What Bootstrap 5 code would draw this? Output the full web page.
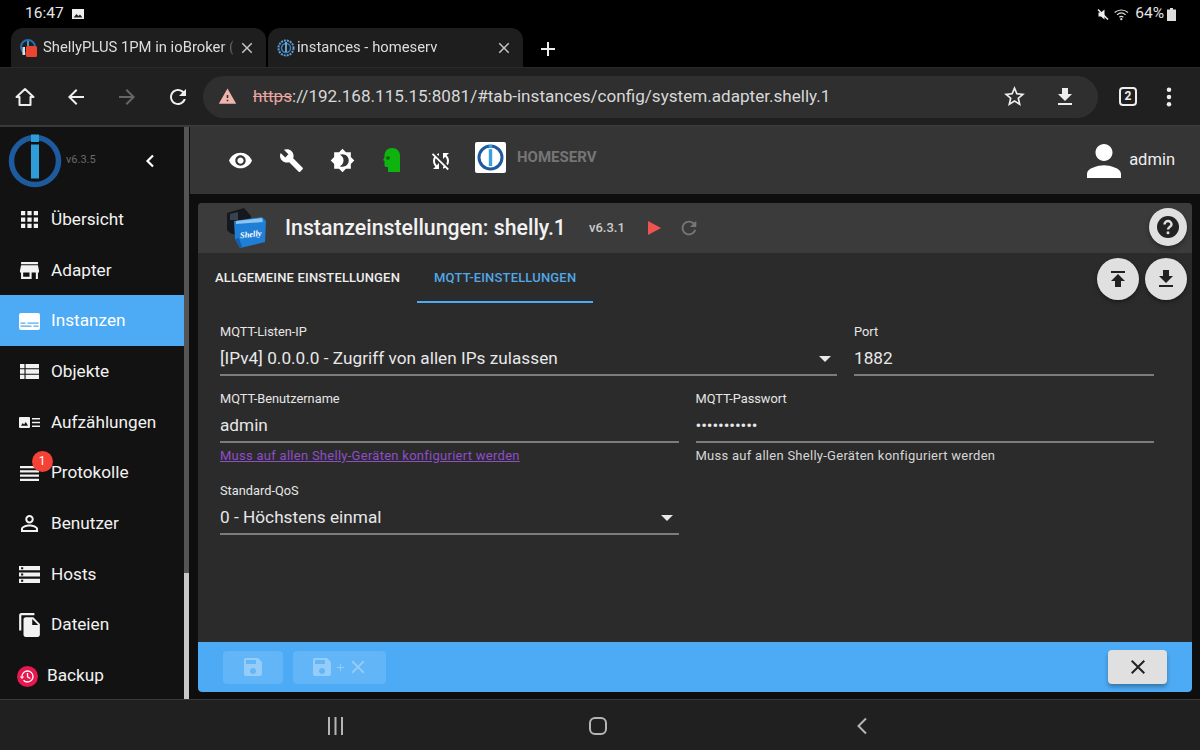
<!DOCTYPE html>
<html lang="de">
<head>
<meta charset="utf-8">
<title>instances - homeserv</title>
<link href="https://cdn.jsdelivr.net/npm/bootstrap@5.3.0/dist/css/bootstrap.min.css" rel="stylesheet">
<style>
html,body{margin:0;height:750px;width:1200px;overflow:hidden;background:#000;font-family:Roboto,"Liberation Sans",sans-serif;color:#fff}
svg{display:block;fill:currentColor;flex:none}
.shell{width:1200px;height:750px}
.statusbar{height:28px;padding:0 24px 0 25px;font-size:15.5px;color:#e4e4e4;line-height:1}
.status-right{gap:5px}
.status-batt{margin-left:-2px}
.tabstrip{height:39px;padding-left:11px;gap:2px;color:#ddd}
.browser-tab{width:255px;height:39px;background:#1e1e1e;border-radius:12px 12px 0 0;padding:0 10px 0 9px;font-size:14.8px;white-space:nowrap;overflow:hidden;gap:5px}
.browser-tab span{flex:1;overflow:hidden;-webkit-mask-image:linear-gradient(90deg,#000 94%,rgba(0,0,0,.2));mask-image:linear-gradient(90deg,#000 94%,rgba(0,0,0,.2))}
.browser-tab span.tight{margin-left:-3px}
.browser-tab .tab-x{color:#c4c4c4}
.tab-add{margin-left:11px;margin-top:3px;color:#eee}
.toolbar{height:60px;background:#202020;border-top:1px solid #2a2a2a;border-bottom:2px solid #3a3a3a;padding:0 0 0 13px;color:#eee}
.tb-ico{margin-right:27px}
.tb-ico.last{margin-right:0}
.tb-off{color:#666}
.url-pill{width:895px;height:42px;background:#2f2f2f;border-radius:21px;margin-left:13px;margin-right:21px;padding:0 21px 0 15px;font-size:17.1px;color:#d8d8d8;white-space:nowrap}
.url-warn{color:#eeb4ae;margin-right:16px}
.url-text{padding-top:1px}
.url-pill s{color:#e8a5a0;text-decoration-thickness:1px}
.url-acts{gap:26px;color:#eee}
.tab-count{width:18px;height:19px;border:2px solid #eee;border-radius:4px;font-size:12px;font-weight:700;line-height:15px;text-align:center}
.tb-dots{margin-left:29px}
.appbody{height:572px;background:#0e0e0e}
.sidebar{width:184px;background:#121212;flex:none}
.side-head{height:67px;padding-left:8px}
.side-ver{font-size:11px;color:#6a6a6a;margin-left:4px;width:30px}
.side-back{margin-left:48px}
.side-link{height:50.7px;padding:1px 0 0 20px;color:#f2f2f2;font-size:17.2px;gap:12px;position:relative}
.side-link:hover{color:#f2f2f2}
.side-link.is-on{background:#4dabf5;color:#fff}
.side-link.is-backup{padding-left:17px;gap:9px}
.ico-wide{margin-left:-1px;margin-right:-1px}
.ico-grid{margin-left:1px;margin-right:1px}
.side-badge{position:absolute;left:31.5px;top:4px;width:21px;height:21px;border-radius:50%;background:#f44336;font-size:12px;line-height:21px;text-align:center;color:#fff}
.scrolltrack{width:5px;background:#555;flex:none;display:flex;flex-direction:column;justify-content:flex-end;margin-right:1px}
.scrollthumb{height:126px;background:#c8c8c8}
.app-main{min-width:0}
.app-head{height:67px;background:#353535;padding-left:38px;padding-right:25px}
.head-ico{margin-right:26px;color:#fff}
.head-ico.b{margin-right:25px}
.head-green{margin-left:3px;margin-right:28px}
.head-sync{margin-right:22px}
.brand-box{width:31px;height:31px;background:#fff;border-radius:2px;margin-top:-6px}
.brand-name{font-size:15px;font-weight:700;color:#757575;margin-left:11px;margin-top:-6px}
.user-name{font-size:16.5px;color:#eee;margin-left:8px}
.cfg-wrap{padding:9px 8px 7px 8px;height:505px}
.cfg-card{height:489px;background:#2b2b2b;border-radius:4px;position:relative;overflow:hidden}
.cfg-title{height:50px;background:#3b3b3b;padding-left:26px}
.cfg-title h1{font-size:21.3px;font-weight:500;margin:0 0 0 19px;color:#f2f2f2;line-height:1}
.cfg-ver{font-size:13px;font-weight:500;color:#ccc;margin-left:23px;margin-right:23px}
.cfg-play{margin-right:17px}
.cfg-reload{color:#777}
.tabs-row{height:50px;border:0;flex-wrap:nowrap}
.tab-item{height:50px;padding:0 17px;font-size:13px;font-weight:500;letter-spacing:.17px;color:#eee;text-transform:uppercase;line-height:50px;white-space:nowrap;border-bottom:2px solid transparent}
.tab-item.is-on{color:#52a8e6;border-bottom-color:#4dabf5}
.round-btn{position:absolute;border-radius:50%;background:#e0e0e0;color:#222;display:flex;align-items:center;justify-content:center;box-shadow:0 2px 4px rgba(0,0,0,.4);padding:0;border:0}
.rb-help{width:38px;height:38px;right:5px;top:5px}
.rb-up{width:42px;height:42px;right:53px;top:55px}
.rb-down{width:42px;height:42px;right:5px;top:55px}
.cfg-form{height:339px;padding:21px 38px 0 22px}
.cfg-row{--bs-gutter-x:17px;margin-left:-8.5px;margin-right:-8.5px}
.fld{border-bottom:2px solid #7c7c7c;height:52px;position:relative}
.fld-wrap{height:67px}
.fld-label{font-size:12.8px;line-height:16px;color:#e6e6e6;height:22px;white-space:nowrap}
.fld-val{font-size:17.2px;line-height:25px;color:#e8e8e8;letter-spacing:.02px;white-space:nowrap}
.fld-val.pw{font-size:17px;letter-spacing:-.1px}
.caret-down{position:absolute;right:6px;top:32px;width:0;height:0;border:6px solid transparent;border-top:6px solid #e8e8e8;border-bottom:0}
.fld-help{font-size:13px;line-height:16px;margin-top:5px;color:#d6d6d6;white-space:nowrap;letter-spacing:.27px}
.fld-help a{color:#8e4ec6;text-decoration:underline}
.row-two{height:92px}
.cfg-foot{height:50px;background:#4dabf5;padding:8px 25px 8px 25px;gap:10px;border-radius:0 0 4px 4px}
.foot-dis{height:33px;background:rgba(255,255,255,.12);border:0;border-radius:4px;color:rgba(255,255,255,.32);padding:0;display:flex;align-items:center;justify-content:center}
.foot-dis.one{width:60px}
.foot-dis.two{width:93px}
.foot-close{width:59px;height:34px;background:#e0e0e0;border:0;border-radius:4px;color:#222;padding:0;box-shadow:0 3px 4px rgba(0,0,0,.3);display:flex;align-items:center;justify-content:center}
.navbottom{height:51px;background:#202020;border-top:1px solid #3a3a3a;color:#b5b5b5;padding-left:327px;padding-top:2px}
.nb-home{margin-left:245px}
.nb-back{margin-left:249px}
</style>
</head>
<body>
<div class="shell d-flex flex-column">

  <div class="statusbar d-flex align-items-center justify-content-between">
    <div class="d-flex align-items-center gap-2">
      <span>16:47</span>
      <svg width="12" height="12" viewBox="0 0 12 12"><path d="M0 1h12v10H0z" fill="#eee"/><path d="M1.500 9.500l3-3.500 2 2 1.500-1.500 2.500 3z" fill="#222"/></svg>
    </div>
    <div class="status-right d-flex align-items-center">
      <svg width="12" height="13" viewBox="0 0 24 24"><path d="M3 8h5l7-6v20l-7-6H3z" fill="#eee"/><path d="M2 2l20 20" stroke="#eee" stroke-width="3"/></svg>
      <svg width="16" height="13" viewBox="0 0 24 18" fill="none"><path d="M1 6c6-5 14-5 20 0M4.500 9.500c4-3.500 9-3.500 13 0M8 13c2-1.500 4-1.500 6 0" stroke="#ddd" stroke-width="1.800" fill="none"/><circle cx="11" cy="16" r="1.700" fill="#ddd"/></svg>
      <span>64%</span>
      <svg class="status-batt" width="9" height="13" viewBox="0 0 9 13"><path d="M3 0h3v1.500h3V13H0V1.500h3z" fill="#ddd"/></svg>
    </div>
  </div>

  <div class="tabstrip d-flex align-items-end">
    <div class="browser-tab d-flex align-items-center">
      <svg width="18" height="18" viewBox="0 0 18 18"><circle cx="8" cy="8" r="7" fill="none" stroke="#2a6ca8" stroke-width="2"/><rect x="2.500" y="8" width="2.500" height="8" fill="#ddd"/><rect x="7" y="2" width="2" height="5" fill="#3a9ad9"/><rect x="6" y="7" width="11" height="11" rx="1.500" fill="#e9452f"/></svg>
      <span>ShellyPLUS 1PM in ioBroker (</span>
      <svg class="tab-x" width="18" height="18" viewBox="0 0 24 24"><path d="M19 6.410L17.590 5 12 10.590 6.410 5 5 6.410 10.590 12 5 17.590 6.410 19 12 13.410 17.590 19 19 17.590 13.410 12z"/></svg>
    </div>
    <div class="browser-tab d-flex align-items-center">
      <svg width="18" height="18" viewBox="0 0 18 18"><circle cx="9" cy="9" r="7.500" fill="none" stroke="#5d9fd8" stroke-width="2" stroke-dasharray="2 1"/><circle cx="9" cy="9" r="4.500" fill="none" stroke="#3f7fc0" stroke-width="1.500"/><rect x="8.200" y="3" width="1.600" height="10" fill="#7cc0ee"/></svg>
      <span class="tight">instances - homeserv</span>
      <svg class="tab-x" width="18" height="18" viewBox="0 0 24 24"><path d="M19 6.410L17.590 5 12 10.590 6.410 5 5 6.410 10.590 12 5 17.590 6.410 19 12 13.410 17.590 19 19 17.590 13.410 12z"/></svg>
    </div>
    <div class="tab-add align-self-center">
      <svg width="24" height="24" viewBox="0 0 24 24"><path d="M19 13h-6v6h-2v-6H5v-2h6V5h2v6h6z"/></svg>
    </div>
  </div>

  <div class="toolbar d-flex align-items-center">
    <svg class="tb-ico" width="24" height="24" viewBox="0 0 24 24"><path d="M12 4L3.500 12H6.500V20H17.500V12H20.500z" fill="none" stroke="currentColor" stroke-width="2" stroke-linejoin="round"/></svg>
    <svg class="tb-ico" width="24" height="24" viewBox="0 0 24 24"><path d="M20 11H7.830l5.590-5.590L12 4l-8 8 8 8 1.410-1.410L7.830 13H20v-2z"/></svg>
    <svg class="tb-ico tb-off" width="24" height="24" viewBox="0 0 24 24"><path d="M12 4l-1.410 1.410L16.170 11H4v2h12.170l-5.580 5.590L12 20l8-8z"/></svg>
    <svg class="tb-ico last" width="24" height="24" viewBox="0 0 24 24"><path d="M17.650 6.350C16.200 4.900 14.210 4 12 4c-4.420 0-7.990 3.580-7.990 8s3.570 8 7.990 8c3.730 0 6.840-2.550 7.730-6h-2.080c-.82 2.330-3.040 4-5.650 4-3.310 0-6-2.690-6-6s2.690-6 6-6c1.660 0 3.140.69 4.220 1.780L13 11h7V4l-2.350 2.350z"/></svg>
    <div class="url-pill d-flex align-items-center">
      <svg class="url-warn" width="19" height="19" viewBox="0 0 24 24"><path d="M1 21h22L12 2 1 21zm12-3h-2v-2h2v2zm0-4h-2v-4h2v4z"/></svg>
      <span class="url-text"><s>https</s>://192.168.115.15:8081/#tab-instances/config/system.adapter.shelly.1</span>
      <div class="url-acts ms-auto d-flex align-items-center">
        <svg width="25" height="25" viewBox="0 0 24 24"><path d="M22 9.240l-7.190-.62L12 2 9.190 8.630 2 9.240l5.460 4.730L5.820 21 12 17.270 18.180 21l-1.630-7.030L22 9.240zM12 15.400l-3.760 2.270 1-4.280-3.320-2.880 4.380-.38L12 6.100l1.710 4.040 4.380.38-3.320 2.880 1 4.280L12 15.400z"/></svg>
        <svg width="24" height="24" viewBox="0 0 24 24"><path d="M19 9h-4V3H9v6H5l7 7 7-7zM5 18v2h14v-2H5z"/></svg>
      </div>
    </div>
    <div class="tab-count">2</div>
    <svg class="tb-dots" width="6" height="20" viewBox="0 0 6 22"><circle cx="3" cy="3" r="2.500"/><circle cx="3" cy="11" r="2.500"/><circle cx="3" cy="19" r="2.500"/></svg>
  </div>

  <div class="appbody d-flex">
    <aside class="sidebar">
      <div class="side-head d-flex align-items-center">
        <svg width="54" height="54" viewBox="0 0 54 54"><circle cx="27" cy="27" r="23.500" fill="none" stroke="#1e5a9e" stroke-width="5.500"/><rect x="23" y="0.500" width="8" height="7.500" fill="#2f9ed8"/><rect x="23" y="8" width="8" height="2.500" fill="#121212"/><rect x="23" y="10.500" width="8" height="34" fill="#2f9ed8"/></svg>
        <span class="side-ver">v6.3.5</span>
        <svg class="side-back" width="12" height="14" viewBox="0 0 12 14" fill="none"><path d="M9 1.500L3.500 7 9 12.500" fill="none" stroke="#fff" stroke-width="2.200"/></svg>
      </div>
      <nav class="nav flex-column">
        <a class="nav-link side-link d-flex align-items-center" href="#"><svg class="ico-grid" width="17" height="17" viewBox="4 4 16 16"><path d="M4 8h4V4H4v4zm6 12h4v-4h-4v4zm-6 0h4v-4H4v4zm0-6h4v-4H4v4zm6 0h4v-4h-4v4zm6-10v4h4V4h-4zm-6 4h4V4h-4v4zm6 6h4v-4h-4v4zm0 6h4v-4h-4v4z"/></svg>Übersicht</a>
        <a class="nav-link side-link d-flex align-items-center" href="#"><svg width="19" height="19" viewBox="3 4 18 16"><path d="M20 4H4v2h16V4zm1 10v-2l-1-5H4l-1 5v2h1v6h10v-6h4v6h2v-6h1zm-9 4H6v-4h6v4z"/></svg>Adapter</a>
        <a class="nav-link side-link is-on d-flex align-items-center" href="#"><svg class="ico-wide" width="21" height="17" viewBox="0 0 21 17"><path fill-rule="evenodd" d="M2 0h17a2 2 0 012 2v13a2 2 0 01-2 2H2a2 2 0 01-2-2V2a2 2 0 012-2zM1.500 9.500v1.200h5V9.500zm7 0v1.200h11V9.500zM1.500 12.500v1.200h11v-1.200zm13 0v1.200h5v-1.200z"/></svg>Instanzen</a>
        <a class="nav-link side-link d-flex align-items-center" href="#"><svg width="19" height="15" viewBox="4 5 17 14" preserveAspectRatio="none"><path d="M4 14h4v-4H4v4zm0 5h4v-4H4v4zM4 9h4V5H4v4zm5 5h12v-4H9v4zm0 5h12v-4H9v4zM9 5v4h12V5H9z"/></svg>Objekte</a>
        <a class="nav-link side-link d-flex align-items-center" href="#"><svg class="ico-wide" width="21" height="11" viewBox="0 0 21 11"><path fill-rule="evenodd" d="M1 0h9a1 1 0 011 1v9a1 1 0 01-1 1H1a1 1 0 01-1-1V1a1 1 0 011-1zM2 8.800h7L6.800 5 5 7.400 3.800 6z"/><path d="M13 1h8v1.500h-8zM13 4.700h8v1.500h-8zM13 8.500h8V10h-8z"/></svg>Aufzählungen</a>
        <a class="nav-link side-link d-flex align-items-center" href="#"><svg width="19" height="15" viewBox="4 5 16 14" preserveAspectRatio="none"><path d="M4 15h16v-2H4v2zm0 4h16v-2H4v2zm0-8h16V9H4v2zm0-6v2h16V5H4z"/></svg><span class="side-badge">1</span>Protokolle</a>
        <a class="nav-link side-link d-flex align-items-center" href="#"><svg width="19" height="17" viewBox="4 4 16 16"><path d="M12 5.900c1.160 0 2.100.94 2.100 2.100s-.94 2.100-2.100 2.100S9.900 9.160 9.900 8s.94-2.100 2.100-2.100m0 9c2.970 0 6.100 1.460 6.100 2.100v1.100H5.900V17c0-.64 3.130-2.100 6.100-2.100M12 4C9.790 4 8 5.790 8 8s1.790 4 4 4 4-1.790 4-4-1.790-4-4-4zm0 9c-2.670 0-8 1.340-8 4v3h16v-3c0-2.660-5.330-4-8-4z"/></svg>Benutzer</a>
        <a class="nav-link side-link d-flex align-items-center" href="#"><svg class="ico-wide" width="21" height="17" viewBox="2 4 20 16"><path d="M2 20h20v-4H2v4zm2-3h2v2H4v-2zM2 4v4h20V4H2zm4 3H4V5h2v2zm-4 7h20v-4H2v4zm2-3h2v2H4v-2z"/></svg>Hosts</a>
        <a class="nav-link side-link d-flex align-items-center" href="#"><svg class="ico-wide" width="21" height="24" viewBox="2 1 19 22"><path d="M16 1H4c-1.100 0-2 .9-2 2v14h2V3h12V1zm-1 4l6 6v10c0 1.100-.9 2-2 2H7.990C6.890 23 6 22.100 6 21l.01-14c0-1.100.89-2 1.990-2h7zm-1 7h5.500L14 6.500V12z"/></svg>Dateien</a>
        <a class="nav-link side-link is-backup d-flex align-items-center" href="#"><svg width="21" height="21" viewBox="0 0 21 21"><circle cx="10.500" cy="10.500" r="10.500" fill="#e8174f"/><path d="M5 10.500a5.500 5.500 0 115.500 5.500 5.500 5.500 0 01-4-1.700M10.500 7v3.800l2.800 1.700" fill="none" stroke="#fff" stroke-width="1.300"/><path d="M2.800 10.500h4.400L5 13z" fill="#fff"/></svg>Backup</a>
      </nav>
    </aside>
    <div class="scrolltrack"><div class="scrollthumb"></div></div>

    <div class="app-main flex-grow-1 d-flex flex-column">
      <header class="app-head d-flex align-items-center">
        <svg class="head-ico" width="25" height="25" viewBox="0 0 24 24"><path d="M12 4.500C7 4.500 2.730 7.610 1 12c1.730 4.390 6 7.500 11 7.500s9.270-3.110 11-7.500c-1.730-4.390-6-7.500-11-7.500zM12 17c-2.760 0-5-2.240-5-5s2.240-5 5-5 5 2.240 5 5-2.240 5-5 5zm0-8c-1.660 0-3 1.340-3 3s1.340 3 3 3 3-1.340 3-3-1.340-3-3-3z"/></svg>
        <svg class="head-ico" width="25" height="25" viewBox="0 0 24 24"><path d="M22.700 19l-9.100-9.100c.9-2.300.4-5-1.500-6.900-2-2-5-2.400-7.400-1.300L9 6 6 9 1.600 4.700C.4 7.100.9 10.100 2.900 12.100c1.900 1.900 4.600 2.400 6.900 1.500l9.100 9.100c.4.4 1 .4 1.400 0l2.300-2.300c.5-.4.5-1.100.1-1.400z"/></svg>
        <svg class="head-ico b" width="25" height="25" viewBox="0 0 24 24"><path d="M20 8.690V4h-4.690L12 .69 8.690 4H4v4.690L.69 12 4 15.310V20h4.690L12 23.310 15.310 20H20v-4.690L23.310 12 20 8.690zM12 18c-.89 0-1.740-.2-2.500-.55C11.560 16.500 13 14.420 13 12s-1.440-4.500-3.500-5.450C10.260 6.200 11.110 6 12 6c3.310 0 6 2.690 6 6s-2.690 6-6 6z"/></svg>
        <svg class="head-green" width="18" height="25" viewBox="0 0 18 25"><path d="M9 0c5 0 8 3.500 8 8v16H5v-5H3c-1 0-1.500-1-1.500-2v-4L0 12l1.500-2.500V8C1.500 3.500 4.500 0 9 0z" fill="#0eb30e"/><circle cx="5" cy="10" r="1.800" fill="#0a5c0a"/></svg>
        <svg class="head-sync" width="24" height="24" viewBox="0 0 24 24"><path d="M10 6.350V4.260c-.8.21-1.550.54-2.230.96l1.460 1.460c.25-.12.5-.24.77-.33zm-7.140-.94l2.360 2.360C4.450 8.990 4 10.440 4 12c0 2.210.91 4.200 2.360 5.640L4 20h6v-6l-2.240 2.240C6.680 15.150 6 13.660 6 12c0-1 .25-1.940.68-2.770l8.080 8.080c-.25.13-.5.25-.77.34v2.090c.8-.21 1.550-.54 2.230-.96l2.360 2.360 1.270-1.270L4.140 4.140 2.860 5.410zM20 4h-6v6l2.240-2.240C17.320 8.850 18 10.340 18 12c0 1-.25 1.940-.68 2.770l1.460 1.460C19.550 15.010 20 13.560 20 12c0-2.210-.91-4.200-2.360-5.640L20 4z"/></svg>
        <div class="brand-box d-flex align-items-center justify-content-center">
          <svg width="27" height="27" viewBox="0 0 27 27"><circle cx="13.500" cy="13.500" r="11.500" fill="none" stroke="#1e5a9e" stroke-width="3"/><rect x="11.800" y="1" width="3.400" height="21" fill="#3aa0dc"/><rect x="11.800" y="4" width="3.400" height="1.200" fill="#fff"/></svg>
        </div>
        <span class="brand-name">HOMESERV</span>
        <svg class="ms-auto" width="34" height="34" viewBox="4 4 16 16"><path d="M12 12c2.210 0 4-1.790 4-4s-1.790-4-4-4-4 1.790-4 4 1.790 4 4 4zm0 2c-2.670 0-8 1.340-8 4v2h16v-2c0-2.660-5.330-4-8-4z"/></svg>
        <span class="user-name">admin</span>
      </header>

      <div class="cfg-wrap">
        <section class="cfg-card d-flex flex-column">
          <div class="cfg-title d-flex align-items-center">
            <svg width="42" height="40" viewBox="0 0 42 40"><path d="M3 5L20 0l7 8v5L12 14v13l-6-2-3-3z" fill="#15181c"/><path d="M6 6l8-2v8H6z" fill="#3a4250"/><path d="M10 13L38 9l4 4-1 21-25 6-5-9z" fill="#1f7fd6"/><path d="M12 13l26-3 1 4-27 2z" fill="#8cc4ee"/><path d="M11 31l5 9 2-1-3-9z" fill="#155fa8"/><text x="27" y="29" font-size="8.500" font-style="italic" font-weight="700" fill="#fff" text-anchor="middle" font-family="Liberation Serif, serif" transform="rotate(-6 27 29)">Shelly</text></svg>
            <h1>Instanzeinstellungen: shelly.1</h1>
            <span class="cfg-ver">v6.3.1</span>
            <svg class="cfg-play" width="13" height="14" viewBox="0 0 13 14"><path d="M0 0l13 7-13 7z" fill="#ef5350"/></svg>
            <svg class="cfg-reload" width="22" height="22" viewBox="0 0 24 24"><path d="M17.650 6.350C16.200 4.900 14.210 4 12 4c-4.420 0-7.990 3.580-7.990 8s3.570 8 7.990 8c3.730 0 6.840-2.550 7.730-6h-2.080c-.82 2.330-3.040 4-5.650 4-3.310 0-6-2.690-6-6s2.690-6 6-6c1.660 0 3.140.69 4.220 1.780L13 11h7V4l-2.350 2.350z"/></svg>
          </div>
          <button class="round-btn rb-help" type="button" aria-label="Hilfe"><svg width="24" height="24" viewBox="0 0 24 24"><circle cx="12" cy="12" r="11" fill="#222"/><path d="M8.500 9.500a3.500 3.500 0 117 0c0 2.200-3.500 2.600-3.500 5" fill="none" stroke="#e0e0e0" stroke-width="2.400"/><rect x="10.700" y="16.500" width="2.600" height="2.600" fill="#e0e0e0"/></svg></button>
          <button class="round-btn rb-up" type="button" aria-label="Hochladen"><svg width="24" height="24" viewBox="0 0 24 24"><path d="M5 4v2h14V4H5zm0 10h4v6h6v-6h4l-7-7-7 7z"/></svg></button>
          <button class="round-btn rb-down" type="button" aria-label="Herunterladen"><svg width="24" height="24" viewBox="0 0 24 24"><path d="M19 9h-4V3H9v6H5l7 7 7-7zM5 18v2h14v-2H5z"/></svg></button>

          <div class="nav tabs-row">
            <div class="tab-item">Allgemeine Einstellungen</div>
            <div class="tab-item is-on">MQTT-Einstellungen</div>
          </div>

          <div class="cfg-form">
            <div class="row cfg-row fld-wrap">
              <div class="col-8"><div class="fld"><div class="fld-label">MQTT-Listen-IP</div><div class="fld-val">[IPv4] 0.0.0.0 - Zugriff von allen IPs zulassen</div><span class="caret-down"></span></div></div>
              <div class="col-4"><div class="fld"><div class="fld-label">Port</div><div class="fld-val">1882</div></div></div>
            </div>
            <div class="row cfg-row row-two">
              <div class="col-6"><div class="fld"><div class="fld-label">MQTT-Benutzername</div><div class="fld-val">admin</div></div><div class="fld-help"><a href="#">Muss auf allen Shelly-Geräten konfiguriert werden</a></div></div>
              <div class="col-6"><div class="fld"><div class="fld-label">MQTT-Passwort</div><div class="fld-val pw">•••••••••••</div></div><div class="fld-help">Muss auf allen Shelly-Geräten konfiguriert werden</div></div>
            </div>
            <div class="row cfg-row">
              <div class="col-6"><div class="fld"><div class="fld-label">Standard-QoS</div><div class="fld-val">0 - Höchstens einmal</div><span class="caret-down"></span></div></div>
            </div>
          </div>

          <div class="cfg-foot d-flex align-items-center">
            <button class="foot-dis one" type="button" disabled aria-label="Speichern"><svg width="24" height="24" viewBox="0 0 24 24"><path d="M17 3H5c-1.110 0-2 .9-2 2v14c0 1.100.89 2 2 2h14c1.100 0 2-.9 2-2V7l-4-4zm-5 16c-1.660 0-3-1.340-3-3s1.340-3 3-3 3 1.340 3 3-1.340 3-3 3zm3-10H5V5h10v4z"/></svg></button>
            <button class="foot-dis two" type="button" disabled aria-label="Speichern und schließen"><svg width="24" height="24" viewBox="0 0 24 24"><path d="M17 3H5c-1.110 0-2 .9-2 2v14c0 1.100.89 2 2 2h14c1.100 0 2-.9 2-2V7l-4-4zm-5 16c-1.660 0-3-1.340-3-3s1.340-3 3-3 3 1.340 3 3-1.340 3-3 3zm3-10H5V5h10v4z"/></svg><svg width="13" height="13" viewBox="0 0 24 24"><path d="M19 13h-6v6h-2v-6H5v-2h6V5h2v6h6z"/></svg><svg width="22" height="22" viewBox="0 0 24 24"><path d="M19 6.410L17.590 5 12 10.590 6.410 5 5 6.410 10.590 12 5 17.590 6.410 19 12 13.410 17.590 19 19 17.590 13.410 12z"/></svg></button>
            <button class="foot-close ms-auto" type="button" aria-label="Schließen"><svg width="24" height="24" viewBox="0 0 24 24"><path d="M19 6.410L17.590 5 12 10.590 6.410 5 5 6.410 10.590 12 5 17.590 6.410 19 12 13.410 17.590 19 19 17.590 13.410 12z"/></svg></button>
          </div>
        </section>
      </div>
    </div>
  </div>

  <div class="navbottom d-flex align-items-center">
    <svg width="17" height="18" viewBox="0 0 17 18"><path d="M1 0h2v18H1zM7.500 0h2v18h-2zM14 0h2v18h-2z"/></svg>
    <svg class="nb-home" width="18" height="18" viewBox="0 0 18 18" fill="none"><rect x="1" y="1" width="16" height="16" rx="5" fill="none" stroke="currentColor" stroke-width="2"/></svg>
    <svg class="nb-back" width="12" height="18" viewBox="0 0 12 18" fill="none"><path d="M10 1.500L2.500 9l7.500 7.500" fill="none" stroke="currentColor" stroke-width="2"/></svg>
  </div>
</div>
<script src="https://cdn.jsdelivr.net/npm/bootstrap@5.3.0/dist/js/bootstrap.bundle.min.js"></script>
</body>
</html>
